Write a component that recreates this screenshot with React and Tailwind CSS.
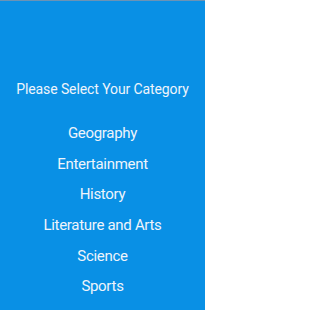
export default function App() {
  const categories = ['Geography', 'Entertainment', 'History', 'Literature and Arts', 'Science', 'Sports'];

  return (
    <main className="h-[310px] w-[205px] bg-[#0990e5] border-t border-[#6b93b5] flex flex-col items-center text-[#eef4fb] font-['Roboto',sans-serif]">
      <h1 className="mt-[78px] text-[14px] leading-[20px] tracking-[-0.1px]">Please Select Your Category</h1>
      <div className="mt-[19px] flex flex-col items-center">
        {categories.map(c => (
          <button key={c} className="h-[30.6px] text-[15px] leading-[20px] tracking-[-0.3px]">
            {c}
          </button>
        ))}
      </div>
    </main>
  );
}
